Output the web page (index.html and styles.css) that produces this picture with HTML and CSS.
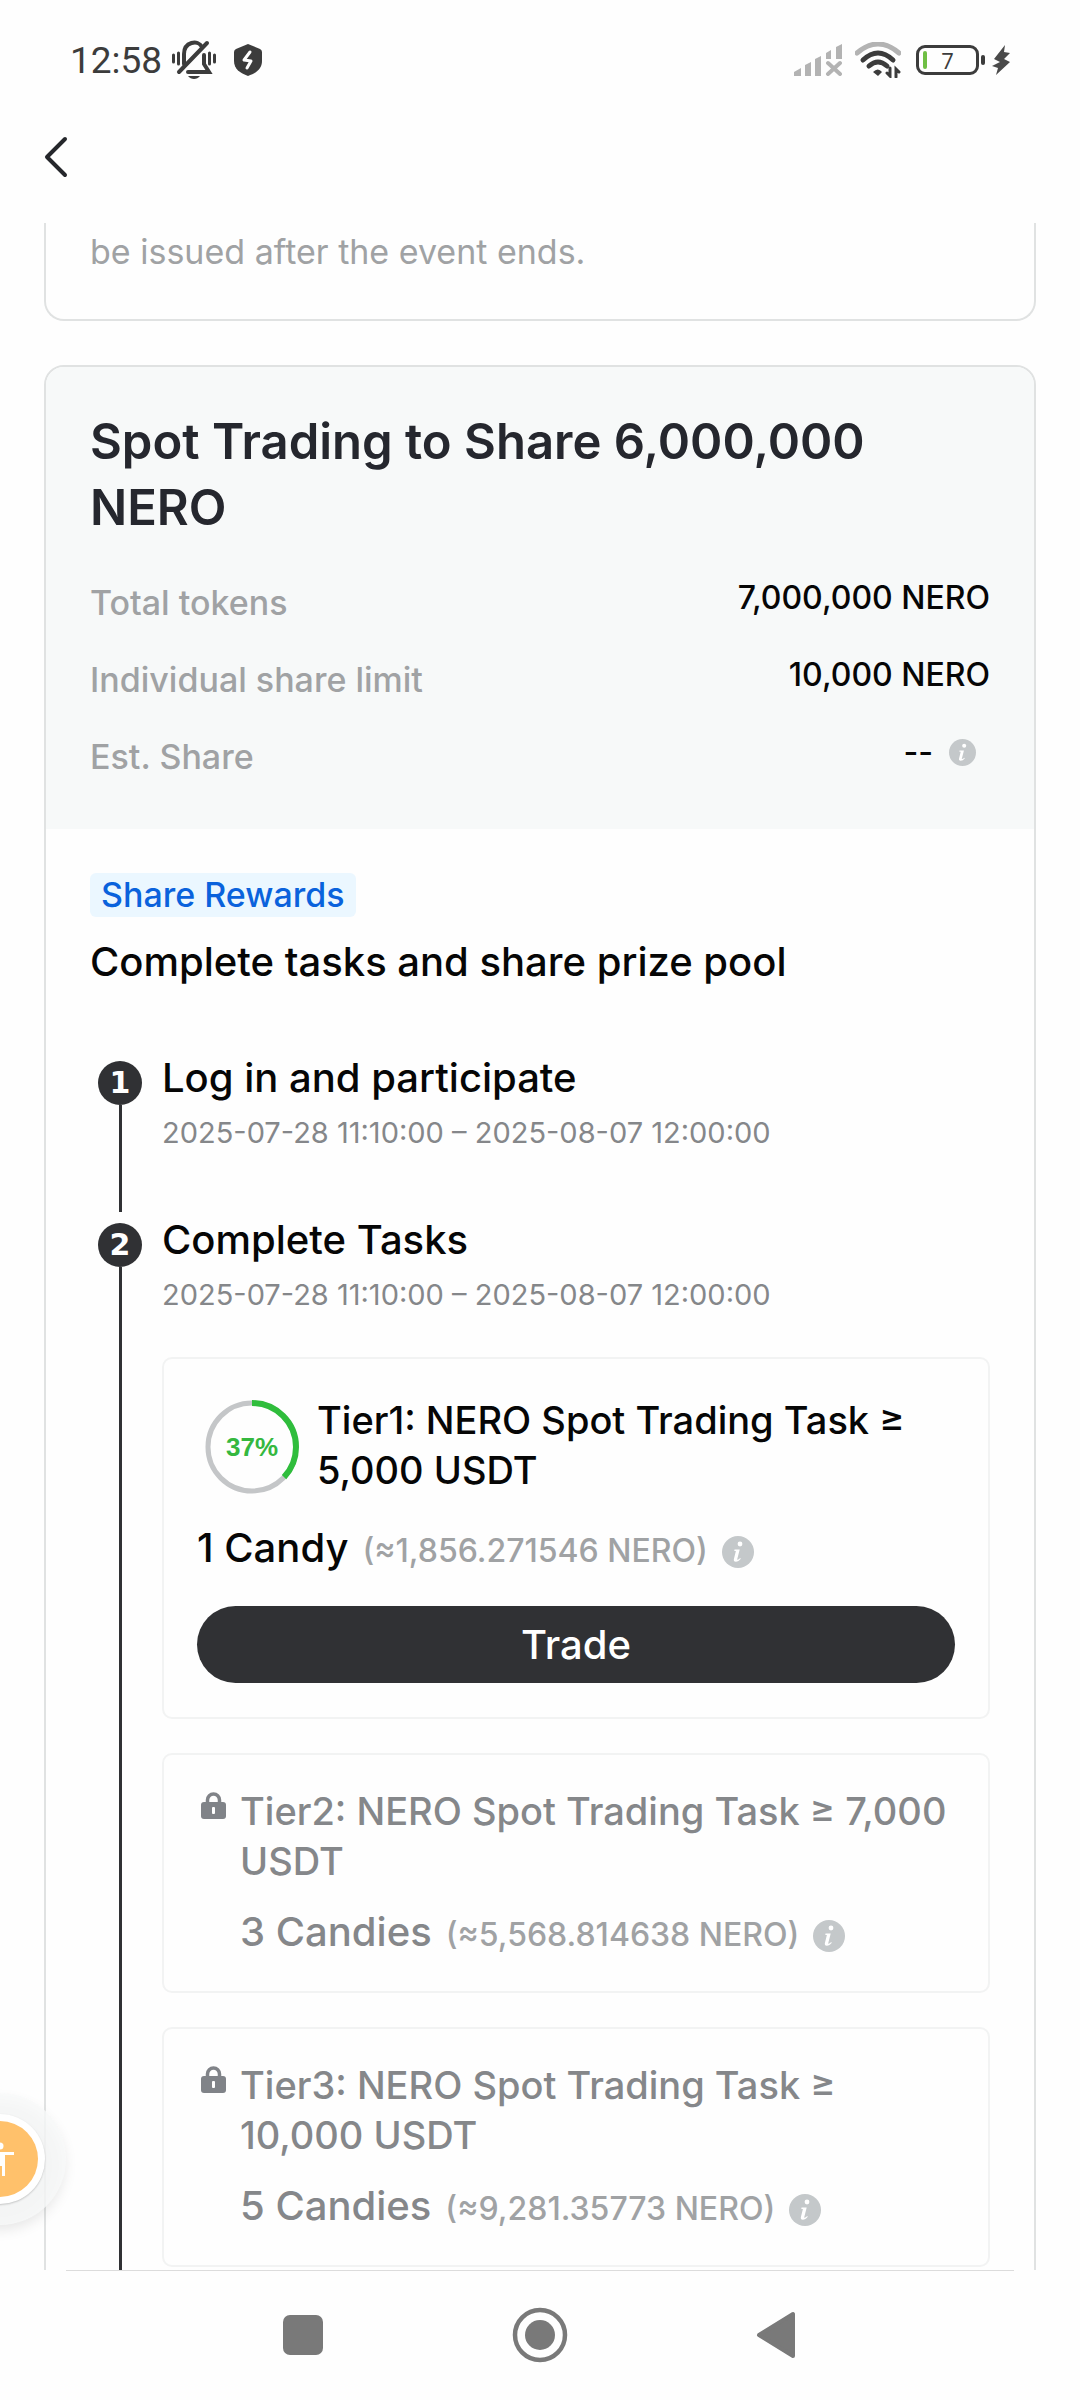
FILE: index.html
```html
<!DOCTYPE html>
<html lang="en">
<head>
    <meta charset="utf-8">
    <title>Spot Trading Event</title>
    <meta name="viewport" content="width=device-width, initial-scale=1">
    <link rel="stylesheet" href="styles.css">
</head>
<body>
    <svg class="defs" width="0" height="0" aria-hidden="true">
        <symbol id="info" viewBox="0 0 32 32">
            <circle cx="16" cy="16" r="16" fill="#c4c8ca"/>
            <circle cx="18" cy="8" r="2.4" fill="#fff"/>
            <path d="M12.5 13.5h5.2l-2.6 10.2c1 .1 2-.5 3-1.6l.7.6c-1.5 2-3.2 3-5 3-1.7 0-2.3-1-1.9-2.6l2-8h-1.6z" fill="#fff"/>
        </symbol>
        <symbol id="lock" viewBox="0 0 25 27">
            <path d="M6.5 12V8a6 6 0 0 1 12 0v4" fill="none" stroke="#808388" stroke-width="3.5"/>
            <rect y="10" width="25" height="17" rx="3" fill="#808388"/>
            <rect x="11" y="15" width="3" height="7" rx="1" fill="#fff"/>
        </symbol>
    </svg>

    <!-- Phone status bar -->
    <div class="status-bar">
        <span class="clock">12:58</span>
        <svg class="bell" viewBox="0 0 44 40" width="44" height="40">
            <g fill="none" stroke="#3c3c3c" stroke-linecap="round" stroke-width="3">
                <path d="M1.5 15v7M6.5 13v11M37.5 13v11M42.5 15v7"/>
                <path d="M12 24V14c0-12 14-15 18-7" stroke-width="4"/>
                <path d="M32 15v9l5 8H16" stroke-width="4"/>
                <path d="M35 3L7 32" stroke-width="4"/>
            </g>
            <path d="M16 36h12c-3 4-9 4-12 0z" fill="#3c3c3c"/>
        </svg>
        <svg class="shield" viewBox="0 0 28 32" width="28" height="32">
            <path d="M14 0l12 5q2 1 2 3v9c0 8-6 12-14 15C6 29 0 25 0 17V8q0-2 2-3z" fill="#3c3c3c"/>
            <path d="M16 8l-6 8 7 1-4 7" fill="none" stroke="#fff" stroke-width="3" stroke-linecap="round" stroke-linejoin="round"/>
        </svg>
        <div class="status-right">
            <svg viewBox="0 0 48 32" width="48" height="32" fill="#b3b3b3">
                <path d="M0 32v-4l7-4v8zM11 32V21l6-3v14zM21 32V15l6-3v20zM32 15V9l5-3v9zM42 15V3l6-3v15z"/>
                <path d="M34 19l12 11M46 19L34 30" stroke="#b3b3b3" stroke-width="4" stroke-linecap="round"/>
            </svg>
            <svg viewBox="0 0 46 36" width="46" height="36" fill="none" stroke-linecap="round">
                <path d="M2 11q21-18 42 0" stroke="#b3b3b3" stroke-width="5"/>
                <path d="M8 18q15-14 30 0M14 24q9-8 18 0" stroke="#3c3c3c" stroke-width="5"/>
                <path d="M18 30q5-5 9 0l-4 4z" fill="#3c3c3c"/>
                <path d="M35 26v8l-3-3M41 35v-8l3 3" stroke="#3c3c3c" stroke-width="3"/>
            </svg>
            <span class="battery"><i class="charge"></i>7</span>
            <svg viewBox="0 0 18 30" width="18" height="30">
                <path d="M13 0L2 14l6 3-8 4 6 2-2 7 14-13-6-3 6-6-6-1z" fill="#4a4a4a"/>
            </svg>
        </div>
    </div>

    <header class="top-bar">
        <button class="back" aria-label="Back">
            <svg viewBox="0 0 24 42" width="24" height="42">
                <path d="M21 3L3 21l18 18" fill="none" stroke="#25272b" stroke-width="4" stroke-linecap="round" stroke-linejoin="round"/>
            </svg>
        </button>
    </header>

    <main class="content">
        <section class="card note">
            <p>be issued after the event ends.</p>
        </section>

        <section class="card event">
            <div class="event-head">
                <h1>Spot Trading to Share 6,000,000 NERO</h1>
                <dl class="facts">
                    <div><dt>Total tokens</dt><dd>7,000,000 NERO</dd></div>
                    <div><dt>Individual share limit</dt><dd>10,000 NERO</dd></div>
                    <div><dt>Est. Share</dt><dd class="has-info">-- <svg class="info-small"><use href="#info"/></svg></dd></div>
                </dl>
            </div>

            <div class="event-body">
                <span class="badge">Share Rewards</span>
                <h2>Complete tasks and share prize pool</h2>

                <ol class="steps">
                    <li class="step">
                        <div class="rail"><span class="dot">1</span></div>
                        <div class="step-body">
                            <h3>Log in and participate</h3>
                            <p class="date">2025-07-28 11:10:00 – 2025-08-07 12:00:00</p>
                        </div>
                    </li>
                    <li class="step">
                        <div class="rail"><span class="dot">2</span></div>
                        <div class="step-body">
                            <h3>Complete Tasks</h3>
                            <p class="date">2025-07-28 11:10:00 – 2025-08-07 12:00:00</p>

                            <div class="tier">
                                <div class="tier-row">
                                    <div class="progress">
                                        <svg viewBox="0 0 94 94">
                                            <circle cx="47" cy="47" r="44" fill="none" stroke="#c4c6c8" stroke-width="5"/>
                                            <circle cx="47" cy="47" r="44" fill="none" stroke="#2fbd3c" stroke-width="6" pathLength="100" stroke-dasharray="37 63" transform="rotate(-90 47 47)"/>
                                        </svg>
                                        <span>37%</span>
                                    </div>
                                    <h4>Tier1: NERO Spot Trading Task ≥ 5,000 USDT</h4>
                                </div>
                                <p class="reward">1 Candy <span>(≈1,856.271546 NERO)</span> <svg class="info"><use href="#info"/></svg></p>
                                <button class="trade">Trade</button>
                            </div>

                            <div class="tier locked">
                                <svg class="lock"><use href="#lock"/></svg>
                                <div>
                                    <h4>Tier2: NERO Spot Trading Task ≥ 7,000 USDT</h4>
                                    <p class="reward">3 Candies <span>(≈5,568.814638 NERO)</span> <svg class="info"><use href="#info"/></svg></p>
                                </div>
                            </div>

                            <div class="tier locked">
                                <svg class="lock"><use href="#lock"/></svg>
                                <div>
                                    <h4>Tier3: NERO Spot Trading Task ≥ 10,000 USDT</h4>
                                    <p class="reward">5 Candies <span>(≈9,281.35773 NERO)</span> <svg class="info"><use href="#info"/></svg></p>
                                </div>
                            </div>
                        </div>
                    </li>
                </ol>
            </div>
        </section>
    </main>

    <button class="assist" aria-label="Accessibility">
        <svg viewBox="0 0 76 76">
            <circle cx="38" cy="38" r="38" fill="#ffc16b"/>
            <circle cx="38" cy="25" r="3.5" fill="#fff"/>
            <path d="M24 31h28v3h-9v21h-3v-10h-4v10h-3V34h-9z" fill="#fff"/>
        </svg>
    </button>

    <nav class="nav-bar">
        <button aria-label="Recent apps"><svg viewBox="0 0 56 56"><rect x="8" y="8" width="40" height="40" rx="7" fill="#797979"/></svg></button>
        <button aria-label="Home"><svg viewBox="0 0 56 56"><circle cx="28" cy="28" r="25" fill="none" stroke="#797979" stroke-width="4.5"/><circle cx="28" cy="28" r="15" fill="#797979"/></svg></button>
        <button aria-label="Back"><svg viewBox="0 0 56 56"><path d="M10 28L44 7v42z" fill="#797979" stroke="#797979" stroke-width="4" stroke-linejoin="round"/></svg></button>
    </nav>
</body>
</html>
```

FILE: styles.css
```css
* {
    box-sizing: border-box;
}
body {
    margin: 0;
    height: 100vh;
    display: flex;
    flex-direction: column;
    overflow: hidden;
    background: #fefefe;
    color: #060606;
    font-family: Inter, "Noto Sans", sans-serif;
    font-weight: 500;
}
h1, h2, h3, h4, p, dl, dd, ol {
    margin: 0;
    padding: 0;
}
h2, h3, h4 {
    font-size: 40px;
    line-height: 50px;
    font-weight: 500;
}
h4 {
    font-size: 38px;
}
button {
    padding: 0;
    border: none;
    background: none;
    font: inherit;
}
svg {
    display: block;
    flex: none;
}
.defs {
    position: absolute;
}

/* Status bar */
.status-bar {
    display: flex;
    align-items: center;
    height: 120px;
    padding: 0 70px;
    font-family: Roboto, sans-serif;
    color: #3c3c3c;
}
.clock {
    font-size: 37px;
    font-weight: 400;
}
.bell {
    margin-left: 10px;
}
.shield {
    margin-left: 18px;
}
.status-right {
    display: flex;
    align-items: center;
    gap: 13px;
    margin-left: auto;
}
.battery {
    position: relative;
    width: 63px;
    height: 30px;
    margin-left: 2px;
    border: 3px solid #3c3c3c;
    border-radius: 9px;
    font: 22px/24px "Open Sans", sans-serif;
    text-align: center;
}
.battery::after {
    content: "";
    position: absolute;
    top: 7px;
    right: -9px;
    width: 4px;
    height: 10px;
    border-radius: 2px;
    background: #3c3c3c;
}
.charge {
    position: absolute;
    top: 3px;
    left: 4px;
    width: 4px;
    height: 18px;
    border-radius: 2px;
    background: #6fbf44;
}

/* Top bar */
.top-bar {
    display: flex;
    align-items: center;
    height: 103px;
    padding: 0 44px;
}
.back {
    margin-bottom: 30px;
}

/* Scrolled content */
.content {
    flex: 1;
    min-height: 0;
    overflow: hidden;
    padding: 0 44px;
}
.card {
    border: 2px solid #e0e2e2;
    border-radius: 20px;
    overflow: hidden;
}
.note {
    margin-bottom: 44px;
    padding: 4px 44px 42px;
    border-top: none;
    border-radius: 0 0 20px 20px;
    color: #a0a2a4;
    font-size: 34px;
    line-height: 50px;
    font-weight: 400;
}
.event-head {
    padding: 42px 44px 25px;
    background: #f7f9f9;
}
h1 {
    margin-bottom: 32px;
    color: #25272e;
    font-size: 49px;
    line-height: 66px;
    font-weight: 600;
}
.facts div {
    display: flex;
    justify-content: space-between;
    height: 77px;
    font-size: 34px;
}
.facts dt {
    color: #a0a2a4;
    line-height: 60px;
}
.facts dd {
    font-size: 32px;
    line-height: 50px;
}
.has-info {
    display: flex;
    align-items: center;
    gap: 16px;
    height: 50px;
    padding-right: 14px;
}
.info-small {
    width: 27px;
    height: 27px;
}

/* Tasks */
.event-body {
    padding: 44px;
}
.badge {
    display: inline-block;
    padding: 0 11px;
    border-radius: 6px;
    background: #ebf7ff;
    color: #0a62dc;
    font-size: 34px;
    line-height: 44px;
}
h2 {
    margin: 20px 0 66px;
}
.steps {
    list-style: none;
}
.step {
    display: flex;
    min-height: 162px;
}
.rail {
    display: flex;
    flex-direction: column;
    align-items: center;
    width: 60px;
    margin-right: 12px;
    padding: 8px 0 4px;
}
.step:first-child .rail {
    padding-bottom: 3px;
}
.rail::after {
    content: "";
    flex: 1;
    width: 3px;
    background: #303134;
}
.dot {
    width: 44px;
    height: 44px;
    border-radius: 50%;
    background: #303134;
    color: #fff;
    font-family: "DejaVu Sans", sans-serif;
    font-size: 30px;
    line-height: 44px;
    font-weight: 700;
    text-align: center;
}
.step-body {
    flex: 1;
}
.step:last-child .step-body {
    padding-bottom: 34px;
}
.date {
    margin-top: 10px;
    color: #85878a;
    font-size: 29px;
    line-height: 40px;
    font-weight: 400;
}
.tier {
    margin-top: 34px;
    padding: 36px 33px 34px;
    border: 2px solid #f2f3f3;
    border-radius: 10px;
}
.date + .tier {
    margin-top: 42px;
}
.tier-row {
    display: flex;
    gap: 18px;
    padding: 0 0 7px 8px;
}
.progress {
    position: relative;
    flex: none;
    width: 94px;
    height: 94px;
    margin-top: 5px;
}
.progress span {
    position: absolute;
    inset: 0;
    color: #35b83f;
    font-family: "Liberation Sans", sans-serif;
    font-size: 26px;
    line-height: 94px;
    font-weight: 700;
    text-align: center;
}
.reward {
    display: flex;
    align-items: baseline;
    gap: 14px;
    margin-top: 21px;
    font-size: 40px;
    line-height: 50px;
}
.reward span {
    color: #a0a2a4;
    font-size: 32px;
}
.info {
    align-self: center;
    width: 32px;
    height: 32px;
    margin-top: 4px;
}
.trade {
    width: 100%;
    height: 77px;
    margin-top: 30px;
    border-radius: 39px;
    background: #303134;
    color: #fff;
    font-size: 40px;
}
.locked {
    display: flex;
    gap: 14px;
    padding: 31px 32px 31px 37px;
    color: #85878a;
}
.lock {
    width: 25px;
    height: 27px;
    margin-top: 6px;
}

/* Floating button, half off the left edge */
.assist {
    position: fixed;
    left: -45px;
    bottom: 196px;
    width: 90px;
    height: 90px;
    padding: 7px;
    border-radius: 50%;
    background: #fff;
    box-shadow: 0 1px 2px rgba(0, 0, 0, 0.2), 0 0 0 21px rgba(248, 249, 249, 0.8), 0 6px 14px 19px rgba(0, 0, 0, 0.1);
}

/* System navigation */
.nav-bar {
    position: relative;
    display: flex;
    justify-content: center;
    align-items: center;
    gap: 181px;
    height: 130px;
}
.nav-bar::before {
    content: "";
    position: absolute;
    top: 0;
    left: 66px;
    right: 66px;
    height: 1px;
    background: #dcdcdc;
}
.nav-bar svg {
    width: 56px;
    height: 56px;
}
```
